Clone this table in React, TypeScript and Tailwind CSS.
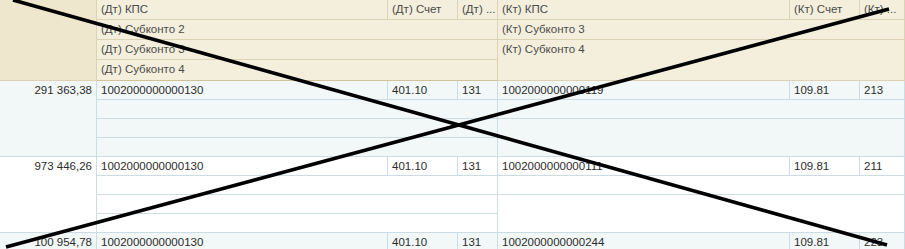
import React from 'react';

const cols = 'grid-cols-[97px_291px_70px_40px_292px_70px_1fr]';

interface Rec {
  sum: string;
  dtKps: string;
  dtAcc: string;
  dtKosgu: string;
  ktKps: string;
  ktAcc: string;
  ktKosgu: string;
}

const records: Rec[] = [
  { sum: '291 363,38', dtKps: '1002000000000130', dtAcc: '401.10', dtKosgu: '131', ktKps: '1002000000000119', ktAcc: '109.81', ktKosgu: '213' },
  { sum: '973 446,26', dtKps: '1002000000000130', dtAcc: '401.10', dtKosgu: '131', ktKps: '1002000000000111', ktAcc: '109.81', ktKosgu: '211' },
  { sum: '100 954,78', dtKps: '1002000000000130', dtAcc: '401.10', dtKosgu: '131', ktKps: '1002000000000244', ktAcc: '109.81', ktKosgu: '223' },
];

function HeadCell({ children, className = '' }: { children?: React.ReactNode; className?: string }) {
  return (
    <div className={`border-r border-b border-[#dcd3b4] px-[4px] leading-[19px] whitespace-nowrap overflow-hidden text-[#4a4a4a] ${className}`}>
      {children}
    </div>
  );
}

function Cell({ children, className = '' }: { children?: React.ReactNode; className?: string }) {
  return (
    <div className={`border-r border-b border-[#cddbe5] px-[4px] leading-[19px] whitespace-nowrap overflow-hidden ${className}`}>
      {children}
    </div>
  );
}

function Record({ rec, odd }: { rec: Rec; odd: boolean }) {
  return (
    <div className={`grid ${cols} grid-rows-[19px_19px_19px_19px] ${odd ? 'bg-[#f2f8f7]' : 'bg-white'}`}>
      <Cell className="row-span-4 col-start-1 row-start-1 text-right">{rec.sum}</Cell>
      <Cell className="col-start-2 row-start-1">{rec.dtKps}</Cell>
      <Cell className="col-start-3 row-start-1">{rec.dtAcc}</Cell>
      <Cell className="col-start-4 row-start-1">{rec.dtKosgu}</Cell>
      <Cell className="col-start-5 row-start-1">{rec.ktKps}</Cell>
      <Cell className="col-start-6 row-start-1">{rec.ktAcc}</Cell>
      <Cell className="col-start-7 row-start-1">{rec.ktKosgu}</Cell>
      <Cell className="col-start-2 col-span-3 row-start-2" />
      <Cell className="col-start-2 col-span-3 row-start-3" />
      <Cell className="col-start-2 col-span-3 row-start-4" />
      <Cell className="col-start-5 col-span-3 row-start-2" />
      <Cell className="col-start-5 col-span-3 row-start-3 row-span-2" />
    </div>
  );
}

export default function App() {
  return (
    <div className="relative w-[905px] h-[249px] overflow-hidden bg-white text-[11.5px] text-[#2b2b2b] font-['Liberation_Sans',Arial,sans-serif]">
      {/* header */}
      <div className={`grid ${cols} grid-rows-[20px_20px_20px_21px] bg-[#f4efdc]`}>
        <HeadCell className="row-span-4 col-start-1 row-start-1 bg-[#efe7cd]" />
        <HeadCell className="col-start-2 row-start-1">(Дт) КПС</HeadCell>
        <HeadCell className="col-start-3 row-start-1">(Дт) Счет</HeadCell>
        <HeadCell className="col-start-4 row-start-1">(Дт) ...</HeadCell>
        <HeadCell className="col-start-5 row-start-1">(Кт) КПС</HeadCell>
        <HeadCell className="col-start-6 row-start-1">(Кт) Счет</HeadCell>
        <HeadCell className="col-start-7 row-start-1">(Кт) ...</HeadCell>
        <HeadCell className="col-start-2 col-span-3 row-start-2">(Дт) Субконто 2</HeadCell>
        <HeadCell className="col-start-5 col-span-3 row-start-2">(Кт) Субконто 3</HeadCell>
        <HeadCell className="col-start-2 col-span-3 row-start-3">(Дт) Субконто 3</HeadCell>
        <HeadCell className="col-start-5 col-span-3 row-start-3 row-span-2">(Кт) Субконто 4</HeadCell>
        <HeadCell className="col-start-2 col-span-3 row-start-4 border-b-[#cfc39c]">(Дт) Субконто 4</HeadCell>
      </div>

      {records.map((rec, i) => (
        <Record key={i} rec={rec} odd={i % 2 === 0} />
      ))}

      {/* crossed-out overlay */}
      <svg className="absolute inset-0 pointer-events-none" width="905" height="249">
        <line x1="13" y1="0" x2="887" y2="245" stroke="#000" strokeWidth="3.6" />
        <line x1="6" y1="247" x2="889" y2="9" stroke="#000" strokeWidth="3.6" />
      </svg>
    </div>
  );
}
